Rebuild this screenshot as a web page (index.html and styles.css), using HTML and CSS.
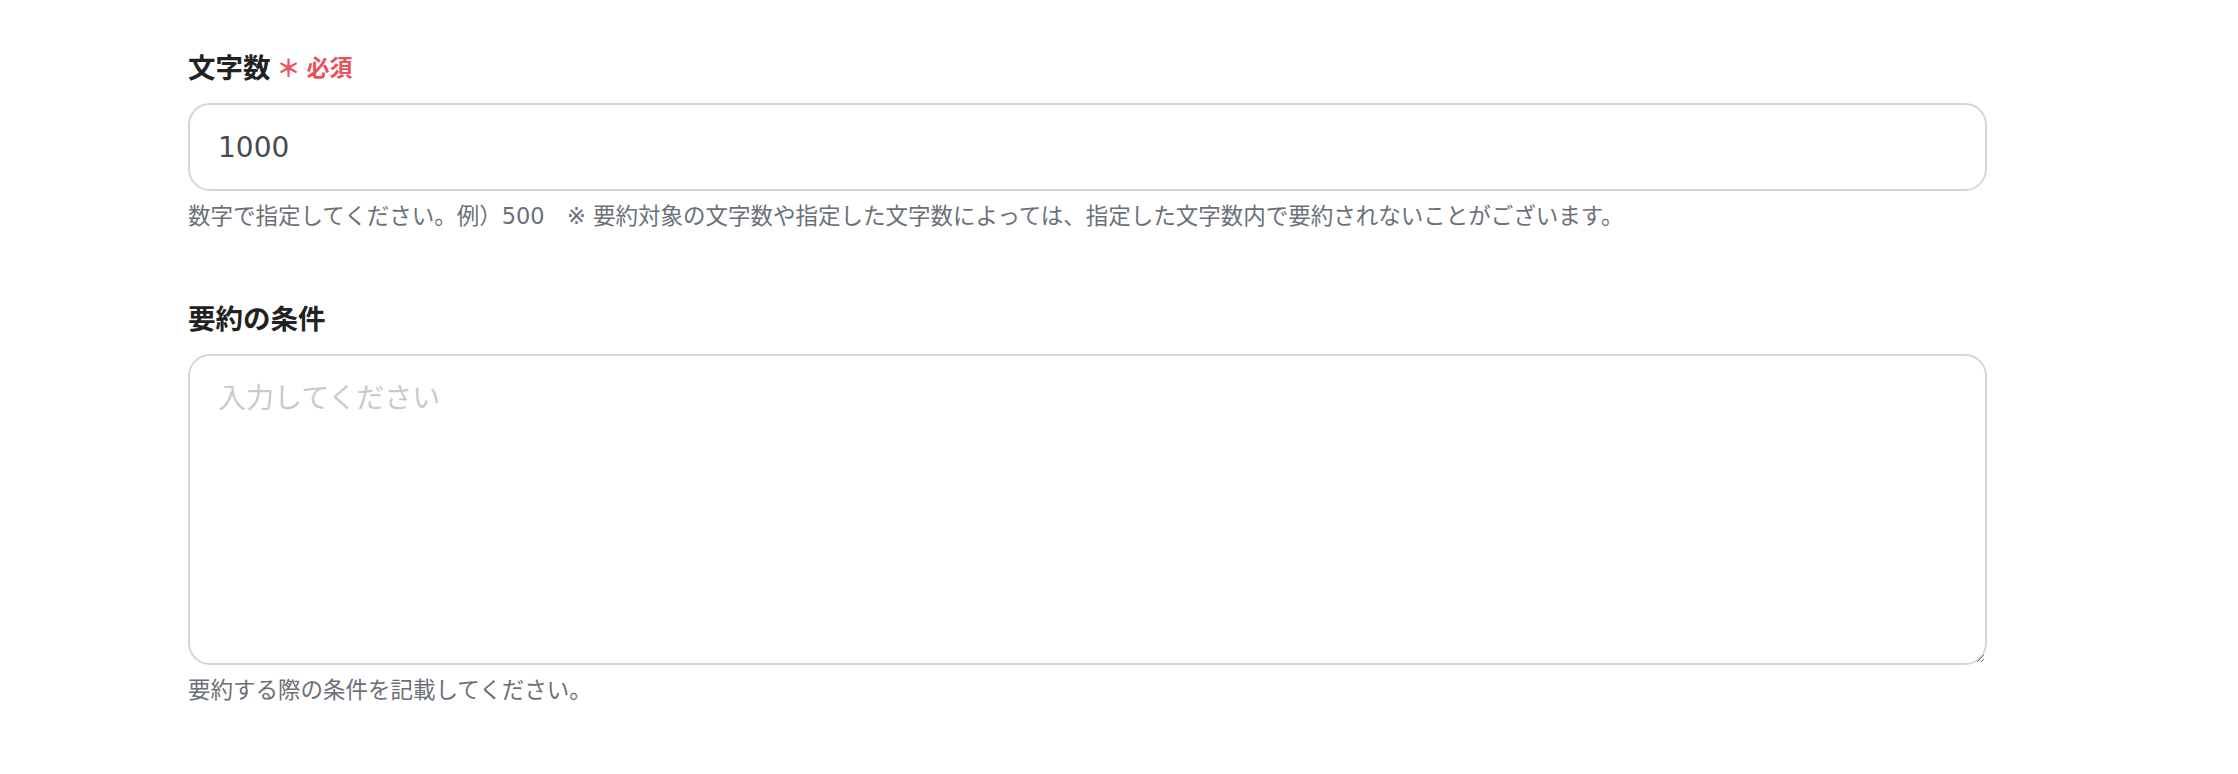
FILE: index.html
```html
<!DOCTYPE html>
<html lang="ja">
<head>
    <meta charset="UTF-8">
    <meta name="viewport" content="width=device-width, initial-scale=1.0">
    <title>要約の設定</title>
    <link rel="stylesheet" href="styles.css">
</head>
<body>
    <form class="settings-form">
        <div class="form-field">
            <label class="field-label" for="charCount">
                <span>文字数</span>
                <span class="required-mark">＊</span>
                <span class="required-text">必須</span>
            </label>
            <input type="text" id="charCount" class="text-input" value="1000">
            <p class="field-help">数字で指定してください。例）500　※ 要約対象の文字数や指定した文字数によっては、指定した文字数内で要約されないことがございます。</p>
        </div>

        <div class="form-field">
            <label class="field-label" for="conditions">
                <span>要約の条件</span>
            </label>
            <textarea id="conditions" class="text-area" placeholder="入力してください"></textarea>
            <p class="field-help">要約する際の条件を記載してください。</p>
        </div>
    </form>
</body>
</html>
```

FILE: styles.css
```css
body {
    margin: 0;
    padding: 0;
    background: #fff;
    font-family: 'Noto Sans CJK JP', 'Noto Sans', sans-serif;
    color: #222;
}

.settings-form {
    width: 1799px;
    padding: 46px 0 0 188px;
    display: flex;
    flex-direction: column;
    gap: 64px;
}

.form-field {
    display: flex;
    flex-direction: column;
}

.field-label {
    display: flex;
    align-items: center;
    gap: 6px;
    height: 40px;
    margin-bottom: 17px;
    font-size: 27.5px;
    font-weight: 700;
    color: #222;
}

.required-mark,
.required-text {
    color: #e9525c;
}

.required-mark {
    font-size: 24px;
    font-weight: 700;
}

.required-text {
    font-size: 23px;
}

.text-input,
.text-area {
    box-sizing: border-box;
    width: 100%;
    border: 2px solid #d3d7dc;
    border-radius: 22px;
    padding: 0 28px;
    font-family: 'DejaVu Sans', 'Noto Sans CJK JP', sans-serif;
    font-size: 28px;
    color: #464b52;
    background: #fff;
    outline: none;
}

.text-input {
    height: 88px;
}

.text-area {
    height: 311px;
    padding-top: 22px;
    line-height: 42px;
    resize: vertical;
}

.text-area::placeholder {
    color: #c9cacc;
}

.field-help {
    margin: 9px 0 0;
    font-family: 'DejaVu Sans', 'Noto Sans CJK JP', sans-serif;
    font-size: 22.5px;
    line-height: 33px;
    color: #6b7078;
}
```
